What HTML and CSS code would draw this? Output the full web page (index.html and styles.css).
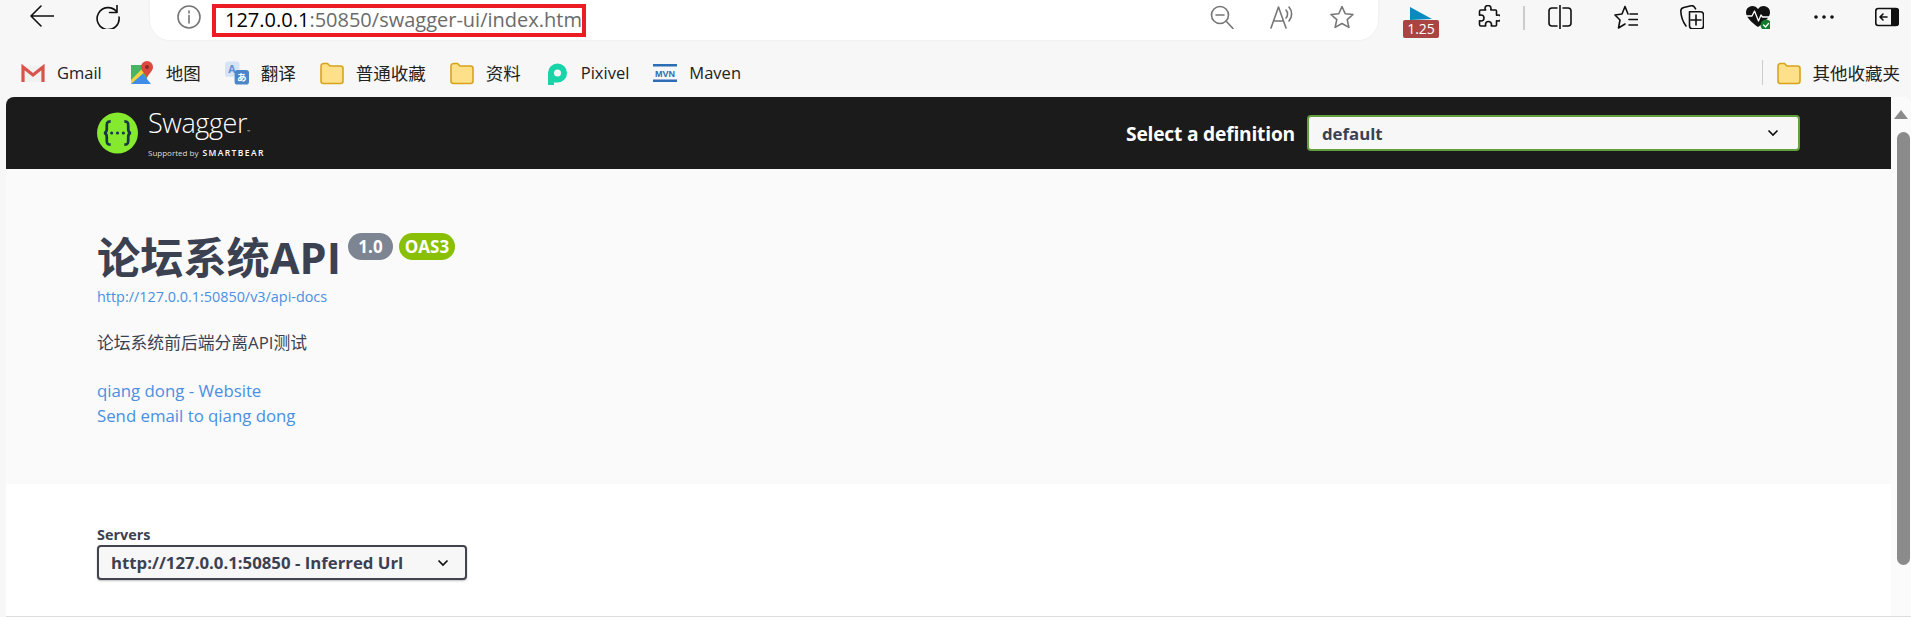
FILE: index.html
```html
<!DOCTYPE html>
<html lang="zh">
<head>
<meta charset="utf-8">
<title>Swagger UI</title>
<link rel="stylesheet" href="styles.css">
</head>
<body>
<div class="toolbar">
  <svg class="ico" viewBox="0 0 24 24"><path class="s-k" d="M1 11h23M11 1 1 11l10 10"/></svg>
  <svg class="ico reload" viewBox="0 0 24 24"><path class="s-k" d="M20.5 6.5A11 11 0 1 0 23 12M21 0v7.5h-7.5"/></svg>
  <div class="pill">
    <svg class="ico" viewBox="0 0 24 24"><circle class="s-g" cx="12" cy="12" r="11"/><path class="s-g" d="M12 10.5V18M12 6v2"/></svg>
    <div class="url"><span class="url-host">127.0.0.1</span>:50850/swagger-ui/index.html</div>
    <div class="pill-tools">
      <svg class="ico" viewBox="0 0 24 24"><circle class="s-g" cx="10" cy="10" r="8.5"/><path class="s-g" d="M6 10h8M16 16l7 7.500"/></svg>
      <svg class="ico" viewBox="0 0 24 24"><path class="s-g" d="M1 23 8.500 2 16 23M3.500 16h10M16 5c2 2 2 6 0 8M19 2c3.500 4 3.500 10 0 14"/></svg>
      <svg class="ico" viewBox="0 0 24 24"><path class="s-g" d="m12 1.500 3.200 7.200 7.800.8-5.800 5.200 1.700 7.700L12 18.500l-6.900 3.900 1.700-7.700L1 9.500l7.800-.8z"/></svg>
    </div>
  </div>
  <div class="ext">
    <svg class="ext-tri" viewBox="0 0 22 13"><path d="M0 0 22 12 0 13z"/></svg>
    <div class="ext-badge">1.25</div>
  </div>
  <svg class="ico puzzle" viewBox="0 0 24 24"><path class="s-k" d="M9 3.500a3 3 0 0 1 6 0c0 1-.5 1.500 0 1.500h4.500a1 1 0 0 1 1 1v4c0 .5.500 0 1.500 0a3 3 0 0 1 0 6c-1 0-1.500-.5-1.500 0v4a1 1 0 0 1-1 1h-4c-.5 0 0-.5 0-1.500a3 3 0 0 0-6 0c0 1 .5 1.500 0 1.500H5a1.500 1.500 0 0 1-1.500-1.500V16c0-.5.500 0 1.500 0a3 3 0 0 0 0-6c-1 0-1.500.5-1.500 0V6.500A1.500 1.500 0 0 1 5 5h4.500c.5 0 -.5-.5-.5-1.500z"/></svg>
  <div class="sep"></div>
  <svg class="ico" viewBox="0 0 24 24"><path class="s-k" d="M12 0v24M9 3H4a3 3 0 0 0-3 3v12a3 3 0 0 0 3 3h5M15 3h5a3 3 0 0 1 3 3v12a3 3 0 0 1-3 3h-5"/></svg>
  <svg class="ico tool" viewBox="0 0 24 24"><path class="s-k" d="M11 1.500 8 9l-7 1 5 5-1.500 8 6.500-4M11 1.500 14 9M16 9h8M15 14.500h9M15 20h9"/></svg>
  <svg class="ico tool" viewBox="0 0 24 24"><path class="s-k" d="M6 21C3 17 1 11 .8 6c0-2 1-3 3-3.500L11 .8c2-.5 3.500.5 4.500 3M9.500 6.800h11a3 3 0 0 1 3 3v11a3 3 0 0 1-3 3h-8a3 3 0 0 1-3-3zM16 10v10M11 15h10"/></svg>
  <div class="tool heart">
    <svg class="ico" viewBox="0 0 24 24"><path class="f-k" d="M12 22C5 17 0 12 0 7.500A6.500 6.500 0 0 1 12 4a6.500 6.500 0 0 1 12 3.500C24 12 19 17 12 22z"/><path class="s-w" d="M0 11h6l2.500-5 4 10 2.500-6 1.500 2h7"/><circle class="f-gr" cx="20" cy="20" r="5.500"/><path class="s-w" d="m17.500 20 2 2 3-3.500"/></svg>
  </div>
  <svg class="ico tool" viewBox="0 0 24 24"><circle class="f-k" cx="4" cy="12" r="1.800"/><circle class="f-k" cx="12" cy="12" r="1.800"/><circle class="f-k" cx="20" cy="12" r="1.800"/></svg>
  <svg class="ico side" viewBox="0 0 24 24"><rect class="s-k" x=".8" y="3.500" width="22.400" height="17" rx="2.500"/><path class="f-k" d="M16 3h5a3 3 0 0 1 3 3v12a3 3 0 0 1-3 3h-5z"/><path class="s-k" d="M12 12H5M8 9l-3 3 3 3"/></svg>
</div>

<div class="bookmarks">
  <div class="bm bm-gmail">
    <svg class="bm-ico" viewBox="0 0 24 24"><path d="M2 5h20v16H2z" fill="#f1f1f1"/><path d="M2 21V6l10 8 10-8v15" fill="none" stroke="#d9534a" stroke-width="3.200"/></svg>
    <span class="bm-latin">Gmail</span>
  </div>
  <div class="bm">
    <svg class="bm-ico" viewBox="0 0 24 24"><path d="M1 4h16v19H1z" fill="#48b564"/><path d="M1 23 12 12l9 11z" fill="#3f8de8"/><path d="M1 23v-4L14 6l3 3z" fill="#f5d33f"/><path d="M17 0a6 6 0 0 1 6 6c0 4-4 6-6 11-2-5-6-7-6-11a6 6 0 0 1 6-6z" fill="#db4a3f"/><circle cx="17" cy="6" r="2" fill="#8e2a22"/></svg>
    <span>地图</span>
  </div>
  <div class="bm">
    <svg class="bm-ico" viewBox="0 0 25 24"><rect x="0" y="0" width="15" height="16" rx="3" fill="#d6e3f5"/><text class="tr-a" x="3.500" y="12">A</text><rect x="10" y="9" width="15" height="15" rx="3" fill="#4a86c8"/><text class="tr-b" x="12.500" y="20.500">あ</text></svg>
    <span>翻译</span>
  </div>
  <div class="bm">
    <svg class="bm-ico" viewBox="0 0 24 24"><path class="folder" d="M1 5a2.500 2.500 0 0 1 2.500-2.500h4L10 5h10.500A2.500 2.500 0 0 1 23 7.500V20a2.500 2.500 0 0 1-2.500 2.500h-17A2.500 2.500 0 0 1 1 20z"/></svg>
    <span>普通收藏</span>
  </div>
  <div class="bm">
    <svg class="bm-ico" viewBox="0 0 24 24"><path class="folder" d="M1 5a2.500 2.500 0 0 1 2.500-2.500h4L10 5h10.500A2.500 2.500 0 0 1 23 7.500V20a2.500 2.500 0 0 1-2.500 2.500h-17A2.500 2.500 0 0 1 1 20z"/></svg>
    <span>资料</span>
  </div>
  <div class="bm">
    <svg class="bm-ico" viewBox="0 0 24 24"><path d="M3 24V12a9.500 9.500 0 1 1 9.500 9.500H9V24z" fill="#19d3a9"/><circle cx="12.500" cy="12" r="3.500" fill="#f7f7f7"/></svg>
    <span class="bm-latin">Pixivel</span>
  </div>
  <div class="bm">
    <svg class="bm-ico" viewBox="0 0 24 24"><rect y="3" width="24" height="2.500" fill="#2d6db5"/><rect y="18.500" width="24" height="2.500" fill="#2d6db5"/><text class="mvn" x="12" y="15.500">MVN</text></svg>
    <span class="bm-latin">Maven</span>
  </div>
  <div class="bm bm-other">
    <svg class="bm-ico" viewBox="0 0 24 24"><path class="folder" d="M1 5a2.500 2.500 0 0 1 2.500-2.500h4L10 5h10.500A2.500 2.500 0 0 1 23 7.500V20a2.500 2.500 0 0 1-2.500 2.500h-17A2.500 2.500 0 0 1 1 20z"/></svg>
    <span>其他收藏夹</span>
  </div>
</div>

<div class="page">
  <div class="content">
    <header class="topbar">
      <div class="logo">
        <svg class="logo-mark" viewBox="0 0 42 42"><circle cx="21" cy="21" r="21" fill="#85ea2d"/><path class="brace" d="M14 9c-4 0-4 2-4 5v3c0 2-1 4-3 4 2 0 3 2 3 4v3c0 3 0 5 4 5M28 9c4 0 4 2 4 5v3c0 2 1 4 3 4-2 0-3 2-3 4v3c0 3 0 5-4 5"/><circle cx="15" cy="21" r="1.600" fill="#173646"/><circle cx="21" cy="21" r="1.600" fill="#173646"/><circle cx="27" cy="21" r="1.600" fill="#173646"/></svg>
        <div class="logo-text">
          <div class="logo-name">Swagger<span class="logo-tm">™</span></div>
          <div class="logo-sub"><span class="logo-by">Supported by</span><span class="logo-sb">SMARTBEAR</span></div>
        </div>
      </div>
      <div class="definition">
        <span class="definition-label">Select a definition</span>
        <div class="definition-select">
          <span>default</span>
          <svg class="chev" viewBox="0 0 12 8"><path d="m1.500 1.500 4.500 4.500 4.500-4.500"/></svg>
        </div>
      </div>
    </header>
    <section class="info">
      <div class="title-row">
        <h2 class="title">论坛系统API</h2>
        <span class="badge badge-ver">1.0</span>
        <span class="badge badge-oas">OAS3</span>
      </div>
      <a class="docs-link">http://127.0.0.1:50850/v3/api-docs</a>
      <p class="desc">论坛系统前后端分离API测试</p>
      <a class="contact">qiang dong - Website</a>
      <a class="contact">Send email to qiang dong</a>
    </section>
    <section class="servers">
      <div class="servers-label">Servers</div>
      <div class="servers-select">
        <span>http://127.0.0.1:50850 - Inferred Url</span>
        <svg class="chev" viewBox="0 0 12 8"><path d="m1.500 1.500 4.500 4.500 4.500-4.500"/></svg>
      </div>
    </section>
  </div>
  <div class="scrollbar">
    <div class="scroll-up"></div>
    <div class="scroll-thumb"></div>
  </div>
</div>
</body>
</html>
```
FILE: styles.css
```css
* { box-sizing: border-box; }
html, body { margin: 0; height: 617px; overflow: hidden; }
body { background: #f7f7f7; font-family: "Open Sans", "Noto Sans CJK SC", sans-serif; color: #1a1a1a; }

.toolbar { height: 48px; display: flex; align-items: flex-start; padding: 5px 0 0 30px; }
.ico { width: 24px; height: 24px; flex: none; display: block; }
.s-k, .s-g, .s-w { fill: none; stroke-width: 1.6; stroke-linejoin: round; stroke-linecap: round; }
.s-k { stroke: #111; }
.s-g { stroke: #767676; }
.s-w { stroke: #fff; stroke-width: 1.3; }
.f-k { fill: #111; }
.f-gr { fill: #107c2f; }
.reload { margin-left: 42px; }
.pill { width: 1228px; height: 40px; margin: -5px 0 0 30px; padding: 5px 24px 0 27px; background: #fff; border-radius: 0 0 20px 20px / 0 0 20px 20px; display: flex; align-items: flex-start; box-shadow: 0 0 3px rgba(0,0,0,.06); }
.url { width: 374px; height: 33px; margin: -1px 0 0 11px; padding-left: 9px; border: 4px solid #ed1c24; font-size: 20px; line-height: 24px; color: #6b6b6b; white-space: nowrap; overflow: hidden; }
.url-host { color: #000; }
.pill-tools { margin-left: auto; display: flex; gap: 36px; }
.ext { width: 36px; margin: 2px 0 0 25px; display: flex; flex-direction: column; }
.ext-tri { width: 22px; height: 13px; margin-left: 7px; display: block; }
.ext-tri path { fill: #0a8abf; }
.ext-badge { height: 18px; background: #a94442; color: #fff; border-radius: 2px; font-size: 14px; line-height: 18px; text-align: center; }
.puzzle { margin-left: 37px; }
.sep { width: 2px; height: 24px; margin: 1px 23px 0 23px; background: #ccc; }
.tool { margin-left: 42px; }
.heart { width: 24px; }
.side { margin-left: 39px; }

.bookmarks { height: 49px; display: flex; align-items: center; gap: 24px; padding: 0 11px 0 21px; font-size: 17.500px; color: #222; }
.bm { display: flex; align-items: center; gap: 12px; white-space: nowrap; }
.bm-ico { width: 24px; height: 24px; flex: none; display: block; }
.bm-latin { font-size: 16.500px; }
.bm-gmail { margin-right: 4px; }
.bm-other { margin-left: auto; padding-left: 14px; border-left: 1px solid #ccc; }
.folder { fill: #ffe08a; stroke: #d6a31c; stroke-width: 1.600; }
.tr-a { font-size: 11px; font-weight: 700; fill: #5b8fd6; }
.tr-b { font-size: 10px; font-weight: 700; fill: #fff; }
.mvn { font-size: 9px; font-weight: 700; fill: #2d6db5; text-anchor: middle; font-family: "Liberation Sans", sans-serif; }

.page { height: 520px; margin-left: 6px; display: flex; background: #fff; border-radius: 8px 8px 0 0; border-bottom: 1px solid #ddd; overflow: hidden; }
.content { flex: 1; min-width: 0; }
.topbar { height: 72px; background: #1b1b1b; padding: 0 91px; display: flex; align-items: center; justify-content: space-between; }

.logo { display: flex; align-items: center; gap: 10px; color: #fff; }
.logo-mark { width: 41px; height: 42px; display: block; }
.brace { fill: none; stroke: #173646; stroke-width: 2.800; }
.logo-text { display: flex; flex-direction: column; }
.logo-name { font-size: 27px; line-height: 30px; font-weight: 300; letter-spacing: -.4px; }
.logo-tm { font-size: 4px; vertical-align: baseline; }
.logo-sub { display: flex; align-items: center; gap: 4px; line-height: 12px; }
.logo-by { font-size: 8px; color: #ddd; }
.logo-sb { font-size: 8.500px; font-weight: 600; letter-spacing: 1.400px; }

.definition { display: flex; align-items: center; gap: 12px; }
.definition-label { font-size: 19.200px; font-weight: 700; color: #fff; letter-spacing: -.2px; }
.definition-select { width: 493px; height: 36px; padding: 0 19px 0 13px; background: #f7f7f7; border: 2px solid #62a03f; border-radius: 4px; display: flex; align-items: center; justify-content: space-between; font-size: 16.800px; font-weight: 700; color: #3b4151; }
.chev { width: 12px; height: 8px; display: block; flex: none; }
.chev path { fill: none; stroke: #111; stroke-width: 1.700; }

.info { height: 315px; background: #fafafa; padding: 60px 91px 0; color: #3b4151; }
.title-row { display: flex; align-items: flex-start; height: 58px; }
.title { margin: 0 7px 0 0; font-size: 43.200px; line-height: 58px; font-weight: 700; }
.badge { height: 27px; margin: 4px 6px 0 0; border-radius: 14px; color: #fff; font-size: 17px; font-weight: 700; line-height: 27px; text-align: center; }
.badge-ver { width: 45px; background: #7d8492; }
.badge-oas { width: 56px; background: #89bf04; }
.docs-link { display: block; font-size: 14.400px; line-height: 20px; color: #4990e2; }
.desc { margin: 24px 0 23px; font-size: 16.800px; line-height: 24px; }
.contact { display: block; font-size: 16.800px; line-height: 25px; color: #4990e2; }

.servers { padding: 42px 91px 0; color: #3b4151; }
.servers-label { font-size: 14.400px; font-weight: 700; line-height: 18px; }
.servers-select { width: 370px; height: 35px; margin-top: 1px; padding: 0 16px 0 12px; background: #f7f7f7; border: 2px solid #41444e; border-radius: 4px; box-shadow: 0 1px 2px rgba(0,0,0,.25); display: flex; align-items: center; justify-content: space-between; font-size: 16.800px; font-weight: 700; }

.scrollbar { width: 20px; flex: none; background: #fbfbfb; padding-top: 13px; display: flex; flex-direction: column; align-items: center; }
.scroll-up { width: 0; height: 0; border-left: 7.500px solid transparent; border-right: 7.500px solid transparent; border-bottom: 9px solid #8b8b8b; }
.scroll-thumb { width: 13px; height: 433px; margin-top: 13px; margin-left: 5px; background: #8b8b8b; border-radius: 7px; }
```
